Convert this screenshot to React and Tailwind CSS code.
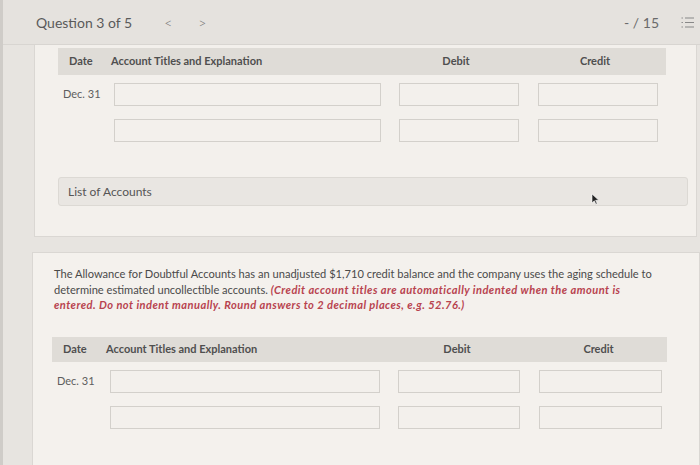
import React from 'react';

const Box = ({ className }) => (
  <div className={`h-[23px] border border-[#d3d0cb] bg-[#f3f0ec] ${className}`} />
);

const JournalTable = ({ wide = false }) => {
  const acc = wide ? 'w-[270px]' : 'w-[267px]';
  const num = wide ? 'w-[122px]' : 'w-[120px]';
  const num2 = wide ? 'w-[123px]' : 'w-[120px]';
  return (
    <div>
      <div className={`flex items-center bg-[#dfdcd7] text-[11px] font-bold text-[#4f4f4f] ${wide ? 'h-[25px] w-[615px]' : 'h-[27px] w-[608px]'}`}>
        <div className={`pl-[11px] ${wide ? 'w-[54px]' : 'w-[53px]'}`}>Date</div>
        <div className={wide ? 'w-[290px]' : 'w-[285px]'}>Account Titles and Explanation</div>
        <div className={`${num} text-center`}>Debit</div>
        <div className="w-[19px]" />
        <div className={`${num2} text-center`}>Credit</div>
      </div>
      <div className="mt-[8px] flex items-center">
        <div className={`pl-[5px] text-[11px] text-[#5e5e5e] ${wide ? 'w-[58px]' : 'w-[56px]'}`}>Dec. 31</div>
        <Box className={acc} />
        <Box className={`ml-[18px] ${num}`} />
        <Box className={`ml-[19px] ${num2}`} />
      </div>
      <div className="mt-[13px] flex items-center">
        <div className={wide ? 'w-[58px]' : 'w-[56px]'} />
        <Box className={acc} />
        <Box className={`ml-[18px] ${num}`} />
        <Box className={`ml-[19px] ${num2}`} />
      </div>
    </div>
  );
};

const App = () => {
  return (
    <div className="relative h-[465px] w-[700px] overflow-hidden bg-[#e7e4e0] font-['Lato',sans-serif] border-l-[3px] border-[#cfccc8]">
      {/* top bar */}
      <div className="flex h-[45px] items-center border-b border-[#d8d5d1] bg-[#e5e2de] pl-[33px] pr-[6px] text-[#5a5a5a]">
        <span className="text-[14px]">Question 3 of 5</span>
        <span className="ml-[32px] text-[14px] font-light text-[#777]">&lt;</span>
        <span className="ml-[26px] text-[14px] font-light text-[#777]">&gt;</span>
        <span className="ml-auto text-[14px] text-[#6a6a6a]">- / 15</span>
        <svg className="ml-[22px]" width="13" height="13" viewBox="0 0 13 13" fill="none" stroke="#888" strokeWidth="1.2">
          <path d="M4 2h9M4 6.5h9M4 11h9" />
          <path d="M0.5 2h1.4M0.5 6.5h1.4M0.5 11h1.4" />
        </svg>
      </div>

      {/* card 1 */}
      <div className="ml-[31px] mr-[3px] h-[192px] border-x border-b border-[#dad7d3] bg-[#f3f0ec] pl-[23px] pt-[3px]">
        <JournalTable />
        <div className="mt-[35px] flex h-[29px] w-[630px] items-center rounded-[3px] border border-[#dcd9d4] bg-[#e9e6e2] pl-[9px] text-[12px] text-[#555]">
          List of Accounts
        </div>
      </div>

      {/* card 2 */}
      <div className="ml-[29px] mt-[15px] h-[230px] border border-[#dad7d3] bg-[#f4f1ed] pl-[21px] pt-[13px]">
        <p className="w-[606px] text-[11.1px] leading-[15.5px] text-[#4a4a4a]">
          The Allowance for Doubtful Accounts has an unadjusted $1,710 credit balance and the company uses the aging schedule to determine estimated uncollectible accounts.{' '}
          <span className="font-bold italic tracking-[0.45px] text-[#b8434f]">
            (Credit account titles are automatically indented when the amount is entered. Do not indent manually. Round answers to 2 decimal places, e.g. 52.76.)
          </span>
        </p>
        <div className="mt-[24px] -ml-[2px]">
          <JournalTable wide />
        </div>
      </div>

      {/* mouse cursor */}
      <svg className="absolute left-[588px] top-[193px]" width="9" height="12" viewBox="0 0 9 12">
        <path d="M1 1v9l2.3-2.2 1.6 3.4 1.3-.6-1.6-3.3H7.8z" fill="#222" stroke="#fff" strokeWidth="0.6" />
      </svg>
    </div>
  );
};

export default App;
